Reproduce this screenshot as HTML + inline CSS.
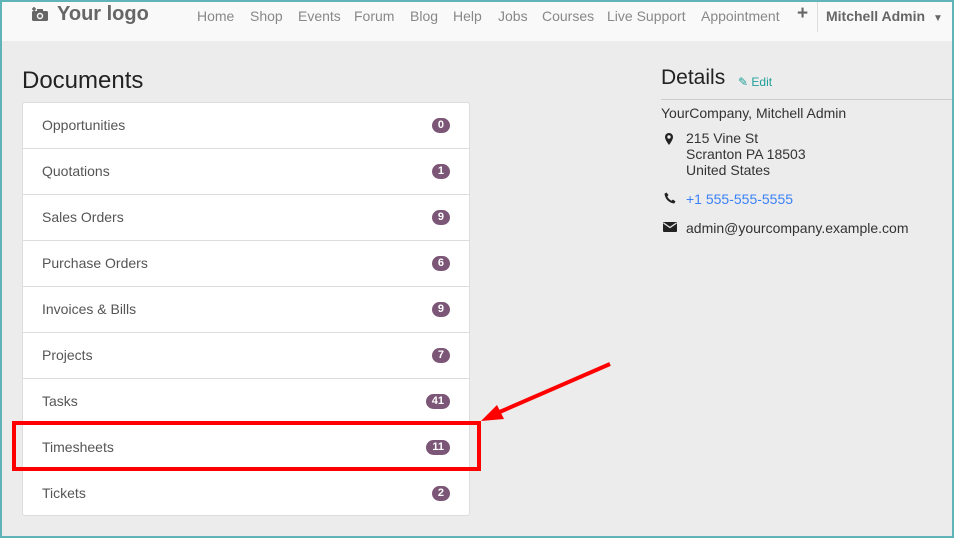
<!DOCTYPE html>
<html><head><style>
*{box-sizing:border-box;margin:0;padding:0}
body{width:954px;height:538px;overflow:hidden;background:#ececec;font-family:"Liberation Sans",sans-serif;position:relative;color:#333}
.frame{position:absolute;inset:0;border:2px solid #5fb4b8;z-index:10;pointer-events:none}
.nav{position:absolute;left:0;top:0;width:954px;height:41px;background:#f9f9f9}
.logo{position:absolute;left:57px;top:3px;font-size:20px;font-weight:bold;color:#666}
.menu{position:absolute;top:8px;font-size:14px;color:#888}
.sep{position:absolute;left:817px;top:2px;width:1px;height:30px;background:#ddd}
h1{position:absolute;left:22px;top:67px;font-size:24px;font-weight:normal;color:#222}
.list{position:absolute;left:22px;top:102px;width:448px;height:414px;background:#fff;border:1px solid #ddd;border-radius:3px}
.row{height:46px;border-bottom:1px solid #ddd;position:relative;font-size:14px;color:#555;padding:14px 0 0 19px}
.row:last-child{border-bottom:none}
.b{position:absolute;right:19px;top:15px;background:#7c5676;color:#fff;font-size:11px;font-weight:bold;border-radius:8px;padding:1px 6px;line-height:13px}
.det{position:absolute;left:661px;top:66px;font-size:21px;color:#222}
.edit{position:absolute;left:738px;top:75px;font-size:12px;color:#21a09a}
.hr{position:absolute;left:661px;top:99px;width:293px;height:1px;background:#ccc}
.t{position:absolute;font-size:14px;color:#333;line-height:16px}
</style></head><body>
<div class="nav">
<svg style="position:absolute;left:31px;top:6px" width="18" height="16" viewBox="0 0 18 16"><path d="M1 1v4M-1 3h4" stroke="#666" stroke-width="1.6" transform="translate(2,0)"/><rect x="1" y="5" width="16" height="10" rx="1.5" fill="#666"/><rect x="6" y="3" width="6" height="3" fill="#666"/><circle cx="9" cy="10" r="3.2" fill="#f9f9f9"/><circle cx="9" cy="10" r="1.8" fill="#666"/></svg>
<div class="logo">Your logo</div>
<span class="menu" style="left:197px">Home</span>
<span class="menu" style="left:250px">Shop</span>
<span class="menu" style="left:298px">Events</span>
<span class="menu" style="left:354px">Forum</span>
<span class="menu" style="left:410px">Blog</span>
<span class="menu" style="left:453px">Help</span>
<span class="menu" style="left:498px">Jobs</span>
<span class="menu" style="left:542px">Courses</span>
<span class="menu" style="left:607px">Live Support</span>
<span class="menu" style="left:701px">Appointment</span>
<span class="menu" style="left:797px;font-weight:bold;color:#666;font-size:19px;top:3px">+</span>
<div class="sep"></div>
<span class="menu" style="left:826px;font-weight:bold;color:#666">Mitchell Admin <span style="font-size:10px;margin-left:4px">&#9660;</span></span>
</div>
<h1>Documents</h1>
<div class="list">
<div class="row">Opportunities<span class="b">0</span></div>
<div class="row">Quotations<span class="b">1</span></div>
<div class="row">Sales Orders<span class="b">9</span></div>
<div class="row">Purchase Orders<span class="b">6</span></div>
<div class="row">Invoices &amp; Bills<span class="b">9</span></div>
<div class="row">Projects<span class="b">7</span></div>
<div class="row">Tasks<span class="b">41</span></div>
<div class="row">Timesheets<span class="b">11</span></div>
<div class="row">Tickets<span class="b">2</span></div>
</div>
<div class="det">Details</div>
<div class="edit">✎ Edit</div>
<div class="hr"></div>
<div class="t" style="left:661px;top:105px">YourCompany, Mitchell Admin</div>
<svg style="position:absolute;left:665px;top:133px" width="8" height="12" viewBox="0 0 8 12"><path d="M4 0a4 4 0 0 0-4 4c0 3 4 8 4 8s4-5 4-8a4 4 0 0 0-4-4zm0 2.3a1.7 1.7 0 1 1 0 3.4 1.7 1.7 0 0 1 0-3.4z" fill="#222"/></svg>
<div class="t" style="left:686px;top:130px">215 Vine St<br>Scranton PA 18503<br>United States</div>
<svg style="position:absolute;left:664px;top:192px" width="12" height="12" viewBox="0 0 12 12"><path d="M2.5 0.5l2 2.5-1.2 1.5c.8 1.8 2.3 3.3 4.2 4.2l1.5-1.2 2.5 2-1.3 2C5 11 1 7 .5 1.8z" fill="#222"/></svg>
<div class="t" style="left:686px;top:191px;color:#3b82f6">+1 555-555-5555</div>
<svg style="position:absolute;left:663px;top:222px" width="14" height="10" viewBox="0 0 14 10"><rect width="14" height="10" rx="1" fill="#222"/><path d="M0.5 1l6.5 4.5L13.5 1" stroke="#ececec" stroke-width="1.3" fill="none"/></svg>
<div class="t" style="left:686px;top:220px">admin@yourcompany.example.com</div>
<div style="position:absolute;left:12px;top:421px;width:469px;height:50px;border:4px solid #f00"></div>
<svg style="position:absolute;left:0;top:0" width="954" height="538"><line x1="610" y1="364" x2="495" y2="414" stroke="#f00" stroke-width="4"/><polygon points="481,421 497,405 504,419" fill="#f00"/></svg>
<div class="frame"></div>
</body></html>
